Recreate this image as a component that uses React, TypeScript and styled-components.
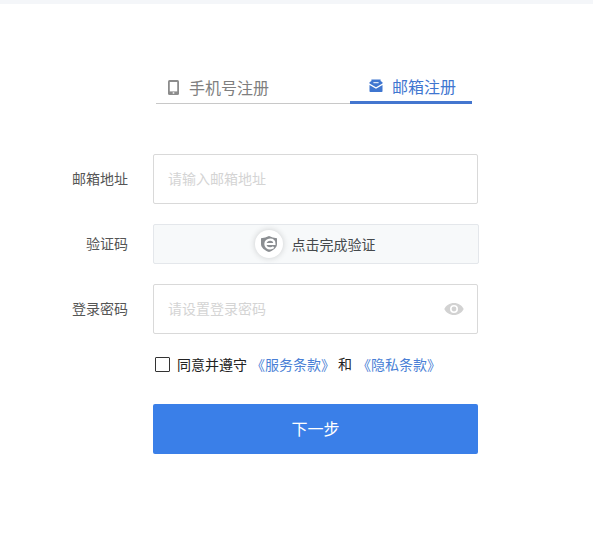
import React from 'react';
import styled, { createGlobalStyle } from 'styled-components';

const GlobalStyle = createGlobalStyle`
  html, body {
    margin: 0;
    padding: 0;
    background: #fff;
  }
  * {
    box-sizing: border-box;
  }
  body {
    font-family: "Liberation Sans", "Noto Sans CJK SC", sans-serif;
  }
`;

const Page = styled.div`
  width: 593px;
  height: 541px;
  overflow: hidden;
  background: #fff;
`;

const TopBar = styled.div`
  height: 4px;
  background: #f4f6f9;
`;

const Tabs = styled.div`
  display: flex;
  width: 316px;
  height: 100px;
  margin-left: 156px;
  align-items: flex-end;
`;

const Tab = styled.div<{ $active?: boolean }>`
  display: flex;
  align-items: flex-start;
  gap: ${(p) => (p.$active ? '9px' : '10px')};
  width: ${(p) => (p.$active ? '122px' : '194px')};
  height: ${(p) => (p.$active ? '29px' : '28px')};
  padding-left: ${(p) => (p.$active ? '19px' : '12px')};
  font-size: 16px;
  line-height: 26px;
  color: ${(p) => (p.$active ? '#3f76d0' : '#7f7f7f')};
  border-bottom: ${(p) => (p.$active ? '3px solid #4476cf' : '1px solid #c8c8c8')};
`;

const TabIcon = styled.svg`
  flex: none;
  margin-top: 4px;
`;

const Form = styled.div`
  display: flex;
  flex-direction: column;
  gap: 20px;
  margin-top: 50px;
`;

const Row = styled.div`
  display: flex;
  align-items: center;
  gap: 25px;
`;

const Label = styled.div`
  width: 128px;
  margin-top: -2px;
  text-align: right;
  font-size: 14px;
  color: #555;
`;

const Field = styled.div`
  display: flex;
  align-items: center;
  width: 325px;
  height: 50px;
  padding: 0 14px;
  background: #fff;
  border: 1px solid #d9d9d9;
  border-radius: 2px;
`;

const Input = styled.input`
  flex: 1;
  min-width: 0;
  padding: 0;
  border: 0;
  outline: 0;
  background: transparent;
  font-family: inherit;
  font-size: 14px;
  color: #333;

  &::placeholder {
    color: #d4d4d4;
    opacity: 1;
  }
`;

const Verify = styled.div`
  display: flex;
  align-items: center;
  justify-content: center;
  gap: 9px;
  width: 326px;
  height: 40px;
  padding-right: 2px;
  background: #f7f9fa;
  border: 1px solid #e4e7eb;
  border-radius: 2px;
  font-size: 14px;
  color: #45494c;
`;

const ShieldBadge = styled.div`
  display: flex;
  align-items: center;
  justify-content: center;
  width: 28px;
  height: 28px;
  border-radius: 50%;
  background: #fff;
  box-shadow: 0 0 6px rgba(0, 0, 0, 0.18);
`;

const Agreement = styled.div`
  display: flex;
  align-items: center;
  height: 20px;
  margin: 0 0 0 155px;
  font-size: 14px;
  color: #222;
`;

const Box = styled.span`
  width: 15px;
  height: 15px;
  margin-right: 7px;
  border: 1.5px solid #333;
  border-radius: 1px;
`;

const TermLink = styled.a`
  margin: 0 3px 0 4px;
  color: #4a7fd6;
`;

const Joiner = styled.span`
  margin: -2px 1px 0 0;
`;

const Submit = styled.button`
  display: block;
  width: 325px;
  height: 50px;
  margin: 30px 0 0 153px;
  padding: 0 0 2px;
  border: 0;
  border-radius: 2px;
  background: #3a7fe8;
  color: #fff;
  font-family: inherit;
  font-size: 16px;
`;

const PhoneIcon = () => (
  <TabIcon width="11" height="15" viewBox="0 0 11 15">
    <rect x="0" y="0" width="11" height="15" rx="1.5" fill="#8c8c8c" />
    <rect x="1.8" y="2" width="7.4" height="9.4" fill="#fff" />
    <rect x="4.7" y="12.3" width="1.6" height="1.4" fill="#fff" />
  </TabIcon>
);

const MailIcon = () => (
  <TabIcon width="14" height="14" viewBox="0 0 14 14">
    <path d="M0.5 3.2 L2.4 2 V0.4 H11.6 V2 L13.5 3.2 V4.4 L7 8.2 L0.5 4.4 Z" fill="#3f76d0" />
    <path d="M0.5 5.9 L7 9.7 L13.5 5.9 V12.2 A0.8 0.8 0 0 1 12.7 13 H1.3 A0.8 0.8 0 0 1 0.5 12.2 Z" fill="#3f76d0" />
    <rect x="4.4" y="3.2" width="5.2" height="1" fill="#fff" />
  </TabIcon>
);

const ShieldIcon = () => (
  <svg width="16" height="16" viewBox="0 0 16 16">
    <path
      d="M0 2.2 Q4.5 2 8 0 Q11.5 2 16 2.2 V8 C16 11.8 12 14.6 8 16 C4 14.6 0 11.8 0 8 Z"
      fill="#8b8e92"
    />
    <path
      d="M5.6 8 H13.4 C13.4 5.2 11.6 3.6 9.2 3.6 C6.4 3.6 4.4 5.5 4.4 8 C4.4 10.6 6.4 12.4 9.2 12.4 C10.5 12.4 11.6 12 12.7 11.2"
      fill="none"
      stroke="#fff"
      strokeWidth="2.2"
    />
  </svg>
);

const EyeIcon = () => (
  <svg width="20" height="12" viewBox="0 0 20 12" style={{ marginRight: -1 }}>
    <path
      fillRule="evenodd"
      d="M10 0 C5.6 0 2 2.4 0.3 6 C2 9.6 5.6 12 10 12 C14.4 12 18 9.6 19.7 6 C18 2.4 14.4 0 10 0 Z M10 10 A4 4 0 1 1 10 2 A4 4 0 0 1 10 10 Z"
      fill="#d2d2d2"
    />
    <circle cx="10" cy="6" r="2.4" fill="#d2d2d2" />
  </svg>
);

const App: React.FC = () => {
  return (
    <Page>
      <GlobalStyle />
      <TopBar />
      <Tabs>
        <Tab>
          <PhoneIcon />
          手机号注册
        </Tab>
        <Tab $active>
          <MailIcon />
          邮箱注册
        </Tab>
      </Tabs>
      <Form>
        <Row>
          <Label>邮箱地址</Label>
          <Field>
            <Input placeholder="请输入邮箱地址" />
          </Field>
        </Row>
        <Row>
          <Label>验证码</Label>
          <Verify>
            <ShieldBadge>
              <ShieldIcon />
            </ShieldBadge>
            点击完成验证
          </Verify>
        </Row>
        <Row>
          <Label>登录密码</Label>
          <Field>
            <Input placeholder="请设置登录密码" />
            <EyeIcon />
          </Field>
        </Row>
        <Agreement>
          <Box />
          同意并遵守
          <TermLink>《服务条款》</TermLink>
          <Joiner>和</Joiner>
          <TermLink>《隐私条款》</TermLink>
        </Agreement>
      </Form>
      <Submit>下一步</Submit>
    </Page>
  );
};

export default App;
